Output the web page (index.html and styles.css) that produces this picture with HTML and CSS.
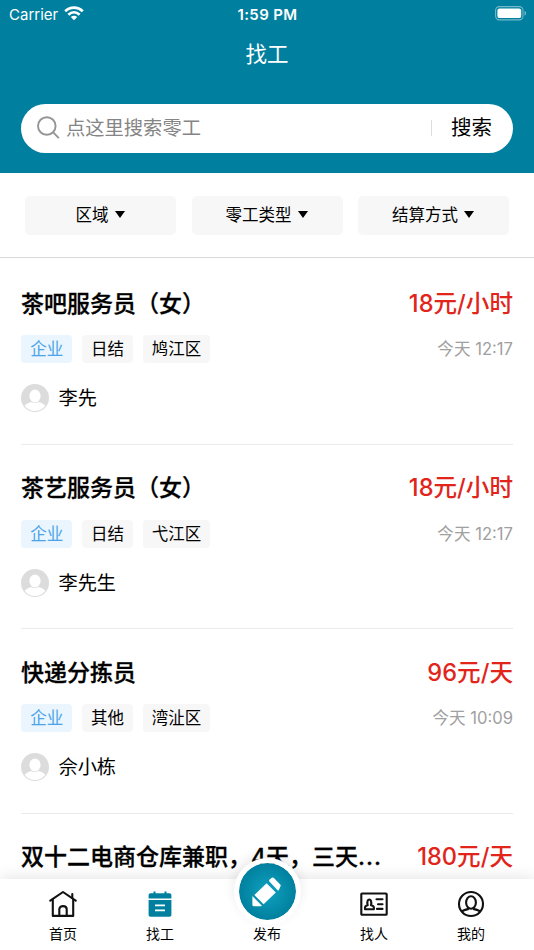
FILE: index.html
```html
<!DOCTYPE html>
<html lang="zh-CN">
<head>
    <meta charset="UTF-8">
    <meta name="viewport" content="width=device-width, initial-scale=1.0">
    <title>找工</title>
    <link rel="stylesheet" href="styles.css">
</head>
<body>
    <header class="header">
        <div class="status-bar">
            <div class="carrier">
                <span>Carrier</span>
                <svg class="wifi" viewBox="0 0 20 15" fill="none" stroke="#fff" stroke-width="2.7">
                    <path d="M1.2 5.2C6.2.5 13.8.5 18.8 5.2"/>
                    <path d="M4.4 8.7c3.3-3 7.9-3 11.2 0"/>
                    <path d="M10 14.3L6.8 11.1c1.9-1.7 4.5-1.7 6.4 0z" fill="#fff" stroke="none"/>
                </svg>
            </div>
            <div class="clock">1:59 PM</div>
            <svg class="battery" viewBox="0 0 32 15">
                <rect x=".6" y=".6" width="27.4" height="13.3" rx="3.8" fill="none" stroke="#fff" stroke-opacity=".45" stroke-width="1.1"/>
                <rect x="2.4" y="2.4" width="23.8" height="9.7" rx="2.2" fill="#fff"/>
                <path d="M29.6 5v4.6c1.9-.7 1.9-3.9 0-4.6z" fill="#fff" fill-opacity=".5"/>
            </svg>
        </div>
        <h1 class="page-title">找工</h1>
        <div class="search">
            <svg class="search-icon" viewBox="0 0 24 24" fill="none" stroke="#959595" stroke-width="1.9">
                <circle cx="10.8" cy="10" r="8.8"/>
                <path d="M17 16.2l5.8 5.9"/>
            </svg>
            <span class="placeholder">点这里搜索零工</span>
            <span class="search-btn">搜索</span>
        </div>
    </header>

    <div class="filters">
        <div class="filter">区域<i class="arrow"></i></div>
        <div class="filter">零工类型<i class="arrow"></i></div>
        <div class="filter">结算方式<i class="arrow"></i></div>
    </div>

    <main class="list">
        <div class="job">
            <div class="row">
                <h2 class="job-title">茶吧服务员（女）</h2>
                <span class="price">18元/小时</span>
            </div>
            <div class="row tags-row">
                <div class="tags">
                    <span class="tag blue">企业</span>
                    <span class="tag">日结</span>
                    <span class="tag">鸠江区</span>
                </div>
                <span class="time">今天 12:17</span>
            </div>
            <div class="user">
                <svg class="avatar" viewBox="0 0 28 28">
                    <circle cx="14" cy="14" r="14" fill="#dcdcdc"/>
                    <ellipse cx="14" cy="12" rx="5.6" ry="6.5" fill="#fff"/>
                    <path d="M3.6 21.8c2.2-2.2 4.5-3.1 6.7-3.7 2.2 1.3 5.2 1.3 7.4 0 2.2.6 4.5 1.5 6.7 3.7A13 13 0 0 1 3.6 21.8z" fill="#fff"/>
                </svg>
                <span>李先</span>
            </div>
        </div>

        <div class="job">
            <div class="row">
                <h2 class="job-title">茶艺服务员（女）</h2>
                <span class="price">18元/小时</span>
            </div>
            <div class="row tags-row">
                <div class="tags">
                    <span class="tag blue">企业</span>
                    <span class="tag">日结</span>
                    <span class="tag">弋江区</span>
                </div>
                <span class="time">今天 12:17</span>
            </div>
            <div class="user">
                <svg class="avatar" viewBox="0 0 28 28">
                    <circle cx="14" cy="14" r="14" fill="#dcdcdc"/>
                    <ellipse cx="14" cy="12" rx="5.6" ry="6.5" fill="#fff"/>
                    <path d="M3.6 21.8c2.2-2.2 4.5-3.1 6.7-3.7 2.2 1.3 5.2 1.3 7.4 0 2.2.6 4.5 1.5 6.7 3.7A13 13 0 0 1 3.6 21.8z" fill="#fff"/>
                </svg>
                <span>李先生</span>
            </div>
        </div>

        <div class="job">
            <div class="row">
                <h2 class="job-title">快递分拣员</h2>
                <span class="price">96元/天</span>
            </div>
            <div class="row tags-row">
                <div class="tags">
                    <span class="tag blue">企业</span>
                    <span class="tag">其他</span>
                    <span class="tag">湾沚区</span>
                </div>
                <span class="time">今天 10:09</span>
            </div>
            <div class="user">
                <svg class="avatar" viewBox="0 0 28 28">
                    <circle cx="14" cy="14" r="14" fill="#dcdcdc"/>
                    <ellipse cx="14" cy="12" rx="5.6" ry="6.5" fill="#fff"/>
                    <path d="M3.6 21.8c2.2-2.2 4.5-3.1 6.7-3.7 2.2 1.3 5.2 1.3 7.4 0 2.2.6 4.5 1.5 6.7 3.7A13 13 0 0 1 3.6 21.8z" fill="#fff"/>
                </svg>
                <span>佘小栋</span>
            </div>
        </div>

        <div class="job">
            <div class="row">
                <h2 class="job-title">双十二电商仓库兼职，4天，三天<span class="dots">...</span></h2>
                <span class="price">180元/天</span>
            </div>
        </div>
    </main>

    <nav class="tabbar">
        <div class="tab">
            <svg class="tab-icon" viewBox="0 0 28 28" fill="none" stroke="#111" stroke-width="2.1" stroke-linejoin="round" stroke-linecap="round">
                <path d="M1.3 10.6L14 2l12.7 8.6"/>
                <path d="M3.8 9.5v16.4h20.4V9.5"/>
                <path d="M23.3 8V4"/>
                <path d="M10.3 25.5v-6.2c0-4.3 7.4-4.3 7.4 0v6.2"/>
            </svg>
            <span>首页</span>
        </div>
        <div class="tab">
            <svg class="tab-icon" viewBox="0 0 28 28" fill="#00809e">
                <path d="M2.6 8.5V5.2c0-1.3.8-2 2-2h2.9V1.5h2v1.7h9V1.5h2v1.7h2.9c1.2 0 2 .7 2 2v3.3z"/>
                <path d="M2.6 9.9h22.8v14.9c0 1.3-.8 2-2 2H4.6c-1.2 0-2-.7-2-2z"/>
                <path d="M9 15.4h10M9 20.4h10" stroke="#fff" stroke-width="1.8"/>
            </svg>
            <span>找工</span>
        </div>
        <div class="tab publish">
            <div class="publish-btn">
                <svg class="pencil" viewBox="0 0 30 30" fill="#fff">
                    <path d="M17.6 2.6L19.6.9c.8-.6 1.6-.6 2.3.1l6.3 6.5c.7.7.7 1.6 0 2.3l-1.4 3.4c-.4.5-.8.5-1.2.1l-8-8.5c-.6-.7-.6-1.5 0-2.2z"/>
                    <path d="M14.6 6.2l9.2 9.2L11.6 27.2l-9.2-9.3z"/>
                    <path d="M.9 19.5l8.6 8.8c.4.5.2.9-.4.9H1.8c-.9 0-1.4-.5-1.4-1.4v-8.1c0-.5.2-.6.5-.2z"/>
                </svg>
            </div>
            <span>发布</span>
        </div>
        <div class="tab">
            <svg class="tab-icon" viewBox="0 0 28 28" fill="none" stroke="#111" stroke-width="2.1" stroke-linecap="round" stroke-linejoin="round">
                <rect x="1.3" y="3.5" width="25.4" height="21.2" rx=".8"/>
                <path d="M16.5 9.3h6M18 14.2h4.5M17 18.9h5.5"/>
                <path d="M5 19.2v-1.4c0-1.4 1-2.1 2.7-2.5-2.1-7.8 5.2-7.8 3.3 0 1.8.4 2.9 1.1 2.9 2.5v1.4z"/>
            </svg>
            <span>找人</span>
        </div>
        <div class="tab">
            <svg class="tab-icon" viewBox="0 0 28 28" fill="none" stroke="#111" stroke-width="2.1">
                <circle cx="14" cy="14" r="12"/>
                <ellipse cx="14" cy="12.5" rx="4.9" ry="6.2"/>
                <path d="M4.8 21.6c1.3-1.5 3.4-2 6.2-2.5l.2-1.5M23.2 21.6c-1.3-1.5-3.4-2-6.2-2.5l-.2-1.5"/>
            </svg>
            <span>我的</span>
        </div>
    </nav>
</body>
</html>
```
FILE: styles.css
```css
* {
    box-sizing: border-box;
}
body {
    margin: 0;
    height: 950px;
    overflow: hidden;
    display: flex;
    flex-direction: column;
    font-family: Inter, "Noto Sans CJK SC", sans-serif;
    color: #000;
    background: #fff;
}
h1, h2 {
    margin: 0;
}
.header {
    height: 173px;
    flex: none;
    background: #00809e;
    color: #fff;
    padding: 0 21px;
}
.status-bar {
    display: grid;
    grid-template-columns: 1fr auto 1fr;
    align-items: center;
    height: 28px;
    margin: 0 -14px 0 -12px;
    font-size: 15px;
}
.carrier {
    display: flex;
    align-items: center;
    gap: 6px;
}
.wifi {
    width: 20px;
    height: 15px;
    margin-bottom: 2px;
}
.clock {
    margin-left: -1px;
    font-weight: 600;
    letter-spacing: 0.35px;
}
.battery {
    width: 32px;
    height: 15px;
    margin-bottom: 1px;
    justify-self: end;
}
.page-title {
    height: 53px;
    line-height: 53px;
    text-align: center;
    font-size: 21.5px;
    font-weight: 400;
}
.search {
    display: flex;
    align-items: center;
    height: 49px;
    margin-top: 22.5px;
    padding: 0 21px 0 15px;
    border-radius: 25px;
    background: #fff;
}
.search-icon {
    width: 24px;
    height: 24px;
}
.placeholder {
    flex: 1;
    margin-left: 6px;
    padding-bottom: 2px;
    font-size: 19.3px;
    color: #858585;
}
.search-btn {
    padding-left: 19.5px;
    font-size: 20.5px;
    line-height: 16px;
    color: #000;
    border-left: 1px solid #ddd;
}
.filters {
    display: flex;
    flex: none;
    gap: 15.5px;
    height: 85px;
    padding: 23px 25px 0;
    border-bottom: 1px solid #d9d9d9;
}
.filter {
    flex: 1;
    display: flex;
    align-items: center;
    justify-content: center;
    height: 39px;
    padding: 0 1px 3px 0;
    border-radius: 5px;
    background: #f7f7f7;
    font-size: 16.5px;
}
.arrow {
    margin: 1px 0 0 6px;
    border: 5.5px solid transparent;
    border-top: 7px solid #000;
    border-bottom: 0;
}
.list {
    flex: 1;
    min-height: 0;
    overflow: hidden;
    padding: 2px 21px 0;
}
.job {
    height: 184.5px;
    padding-top: 24.5px;
    border-bottom: 1px solid #ebebeb;
}
.row {
    display: flex;
    align-items: center;
    justify-content: space-between;
    height: 34px;
}
.job-title {
    font-size: 23px;
    font-weight: 500;
    white-space: nowrap;
    -webkit-text-stroke: 0.3px #000;
}
.dots {
    letter-spacing: 1px;
}
.price {
    font-size: 23.6px;
    font-weight: 500;
    color: #e1251b;
    white-space: nowrap;
}
.tags-row {
    height: 28px;
    margin-top: 16.5px;
}
.tags {
    display: flex;
    gap: 9.4px;
}
.tag {
    height: 28px;
    line-height: 28px;
    padding: 0 9.2px;
    border-radius: 4px;
    background: #f7f7f7;
    font-size: 16.5px;
}
.tag.blue {
    background: #eaf5fe;
    color: #4ba3e8;
}
.time {
    padding-bottom: 1.5px;
    font-size: 16.6px;
    color: #a0a0a0;
}
.user {
    display: flex;
    align-items: center;
    gap: 9.5px;
    height: 28px;
    margin-top: 21px;
    font-size: 19.2px;
}
.user span {
    padding-bottom: 2px;
}
.avatar {
    width: 28px;
    height: 28px;
}
.tabbar {
    position: relative;
    flex: none;
    display: flex;
    justify-content: center;
    height: 71px;
    background: #fff;
    box-shadow: 0 -2px 14px rgba(0, 0, 0, 0.1);
}
.tab {
    display: flex;
    flex-direction: column;
    align-items: center;
    width: 97px;
    padding-top: 11px;
    font-size: 14px;
    line-height: 20px;
}
.tab-icon {
    width: 28px;
    height: 28px;
    margin-bottom: 6px;
}
.publish {
    width: 117px;
    padding-top: 0;
}
.publish-btn {
    display: flex;
    align-items: center;
    justify-content: center;
    width: 67px;
    height: 67px;
    margin: -21px 0 -1px;
    border: 5px solid #fff;
    border-radius: 50%;
    background: radial-gradient(circle, #10a3c0, #00809e 70%);
    background-clip: padding-box;
    background-color: #fff;
    box-shadow: 0 -4px 12px rgba(0, 0, 0, 0.09);
}
.pencil {
    width: 30px;
    height: 30px;
}
```
